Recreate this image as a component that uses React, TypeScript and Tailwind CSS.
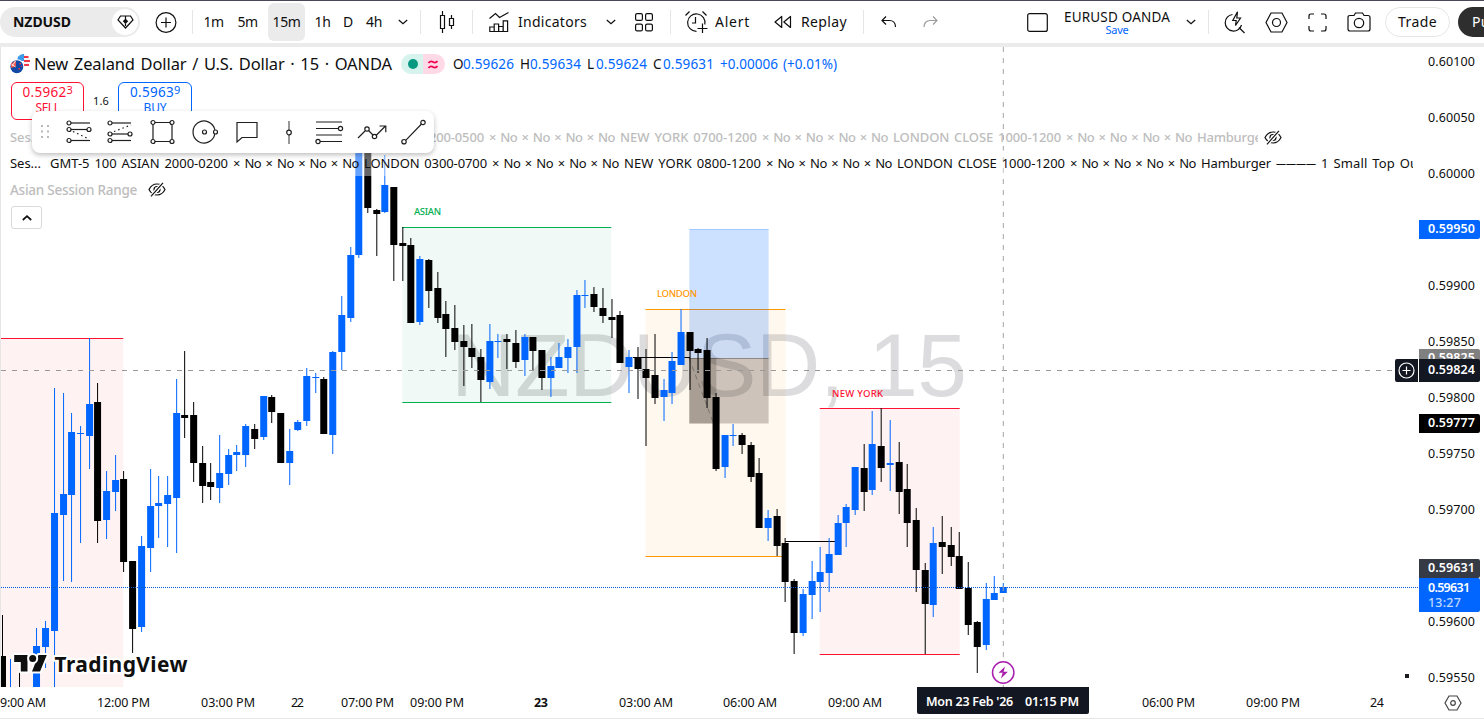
import { useLayoutEffect, useRef, useState } from 'react';
import type { ReactNode } from 'react';
import clsx from 'clsx';

// [high, body top, body bottom, low, 1 = up / 0 = down]
type Candle = [number, number, number, number, 0 | 1];

const CANDLES: Candle[] = [
  [615, 656, 687, 687, 0], [659, 687, 687, 687, 1], [668, 687, 687, 687, 0], [687, 687, 687, 687, 0],
  [628, 646, 687, 687, 1], [621, 628, 647, 668, 1], [388, 513, 631, 687, 1], [393, 494, 515, 581, 1],
  [413, 432, 495, 582, 1], [426, 433, 434, 543, 1], [338, 404, 436, 469, 1], [383, 402, 521, 543, 0],
  [471, 491, 520, 539, 1], [455, 480, 492, 511, 1], [471, 479, 562, 572, 0], [561, 561, 629, 653, 0],
  [536, 546, 627, 632, 1], [469, 506, 548, 572, 1], [476, 503, 506, 538, 1], [476, 495, 504, 547, 1],
  [379, 413, 498, 553, 1], [351, 415, 418, 438, 0], [402, 415, 463, 482, 0], [446, 463, 486, 503, 0],
  [463, 482, 487, 500, 0], [435, 473, 488, 503, 1], [449, 455, 474, 485, 1], [445, 452, 455, 471, 1],
  [424, 426, 455, 467, 1], [424, 429, 439, 449, 0], [396, 396, 437, 440, 1], [395, 397, 412, 423, 0],
  [413, 413, 463, 463, 0], [429, 451, 463, 485, 1], [420, 422, 430, 431, 1], [368, 376, 421, 426, 1],
  [373, 377, 378, 393, 1], [377, 379, 434, 434, 0], [351, 352, 435, 454, 1], [296, 315, 352, 370, 1],
  [247, 255, 318, 322, 1], [125, 130, 255, 258, 1], [125, 130, 208, 213, 0], [209, 210, 214, 256, 0],
  [155, 185, 212, 213, 1], [187, 187, 245, 281, 0], [227, 243, 246, 281, 0], [238, 245, 323, 323, 0],
  [256, 259, 322, 325, 1], [259, 260, 291, 308, 0], [272, 288, 318, 323, 0], [301, 314, 329, 357, 0],
  [305, 328, 342, 350, 0], [325, 341, 347, 386, 0], [324, 348, 357, 368, 0], [349, 357, 380, 402, 0],
  [324, 341, 382, 389, 1], [334, 341, 342, 358, 1], [334, 339, 342, 369, 0], [330, 343, 362, 368, 0],
  [334, 337, 360, 376, 1], [337, 337, 351, 370, 0], [350, 350, 378, 390, 0], [357, 366, 378, 397, 1],
  [343, 357, 368, 368, 1], [339, 347, 358, 373, 1], [290, 295, 347, 373, 1], [280, 295, 296, 308, 1],
  [287, 294, 307, 312, 0], [288, 308, 316, 323, 0], [299, 317, 320, 338, 0], [311, 315, 363, 363, 0],
  [350, 357, 367, 393, 1], [347, 357, 369, 399, 0], [349, 369, 378, 446, 0], [334, 375, 398, 404, 0],
  [379, 390, 397, 421, 1], [352, 361, 393, 404, 1], [309, 332, 365, 365, 1], [332, 332, 351, 390, 0],
  [348, 349, 353, 373, 0], [338, 350, 398, 408, 0], [393, 397, 469, 471, 0], [435, 435, 467, 478, 1],
  [424, 435, 436, 446, 1], [433, 435, 445, 454, 0], [442, 445, 477, 482, 0], [458, 473, 528, 528, 0],
  [510, 518, 528, 541, 1], [509, 516, 546, 556, 0], [538, 543, 582, 602, 0], [579, 581, 633, 654, 0],
  [589, 594, 633, 636, 1], [561, 581, 595, 619, 1], [547, 572, 582, 612, 1], [538, 554, 573, 592, 1],
  [515, 523, 555, 555, 1], [504, 507, 523, 547, 1], [467, 467, 510, 515, 1], [444, 468, 492, 511, 0],
  [411, 444, 490, 495, 1], [408, 446, 468, 482, 0], [420, 463, 465, 491, 1], [442, 462, 492, 514, 0],
  [464, 489, 523, 547, 0], [508, 520, 570, 592, 0], [563, 570, 604, 654, 0], [527, 543, 605, 617, 1],
  [516, 542, 547, 574, 0], [527, 545, 557, 566, 0], [532, 556, 589, 589, 0], [562, 588, 625, 635, 0],
  [621, 622, 647, 673, 0], [583, 599, 645, 650, 1], [576, 593, 600, 600, 1], [583, 587, 593, 593, 1],
];

const SESSIONS = [
  { x: 1, w: 122.3, top: 338, bottom: 687, fill: '#fff2f3', line: '#ff1133', open: true },
  { x: 402.3, w: 209, top: 227, bottom: 402, fill: '#f0f9f5', line: '#00b050', label: 'ASIAN', lx: 414, ly: 215, lw: 27 },
  { x: 645.5, w: 140, top: 309, bottom: 556, fill: '#fff8ef', line: '#ff9800', label: 'LONDON', lx: 657, ly: 297, lw: 40 },
  { x: 819.7, w: 140, top: 408, bottom: 654, fill: '#fff2f3', line: '#ff1133', label: 'NEW YORK', lx: 832, ly: 397, lw: 51 },
];

const TIME_TICKS = [
  { t: '9:00 AM', x: 0, w: 46 },
  { t: '12:00 PM', x: 97, w: 53 },
  { t: '03:00 PM', x: 201, w: 54 },
  { t: '22', x: 291, w: 13 },
  { t: '07:00 PM', x: 341, w: 53 },
  { t: '09:00 PM', x: 410, w: 54 },
  { t: '23', x: 534, w: 14, bold: true },
  { t: '03:00 AM', x: 619, w: 54 },
  { t: '06:00 AM', x: 723, w: 54 },
  { t: '09:00 AM', x: 828, w: 54 },
  { t: '06:00 PM', x: 1142, w: 53 },
  { t: '09:00 PM', x: 1246, w: 54 },
  { t: '24', x: 1370, w: 14 },
];

const PRICES = ['0.60100', '0.60050', '0.60000', '', '0.59900', '0.59850', '0.59800', '0.59750', '0.59700', '', '0.59600', '0.59550'];

// Text tracked so that it fills exactly `w` pixels
const Label = ({ w, children, className }: { w: number; children: string; className?: string }) => {
  const ref = useRef<HTMLSpanElement>(null);
  const [spacing, setSpacing] = useState(0);

  useLayoutEffect(() => {
    if (ref.current) {
      setSpacing((w - ref.current.getBoundingClientRect().width) / children.length);
    }
  }, [w, children]);

  return (
    <span ref={ref} className={clsx('inline-block shrink-0 whitespace-pre', className)} style={{ letterSpacing: `${spacing}px` }}>
      {children}
    </span>
  );
};

const Icon = ({ w, h, className, children }: { w: number; h: number; className?: string; children: ReactNode }) => (
  <svg
    width={w}
    height={h}
    viewBox={`0 0 ${w} ${h}`}
    fill="none"
    stroke="currentColor"
    strokeWidth="1.2"
    className={clsx('block shrink-0 overflow-visible', className)}
  >
    {children}
  </svg>
);

const Separator = ({ className }: { className?: string }) => (
  <div className={clsx('h-6 w-px shrink-0 bg-[#e6e6e6]', className)} />
);

const Chevron = () => (
  <Icon w={10} h={6}>
    <path d="M0.8 1l4.2 3.8L9.2 1" />
  </Icon>
);

const HiddenEye = ({ className }: { className?: string }) => (
  <Icon w={18} h={15} className={className}>
    <path d="M1 7.5C3 3.5 6 2 9 2s6 1.500 8 5.500c-2 4-5 5.500-8 5.500S3 11.500 1 7.500z" />
    <circle cx="9" cy="7.500" r="3" />
    <path d="M3.500 14L15 1" stroke="#fff" strokeWidth="3.500" />
    <path d="M3 14.300L15 .800" />
  </Icon>
);

const Header = () => (
  <header className="flex h-[42px] shrink-0 items-center overflow-hidden bg-white">
    <div className="flex h-[30px] w-[140px] shrink-0 items-center justify-between rounded-full bg-[#ebebeb] pr-[2px] pl-[13px]">
      <Label w={58} className="text-[14px] font-bold">NZDUSD</Label>
      <div className="flex size-[26px] items-center justify-center rounded-full bg-white">
        <Icon w={17} h={14}>
          <path d="M3.500 1h10L16 5 8.500 13 1 5z" />
          <path d="M8.500 3.500l2.700 2.700-2.700 2.700-2.700-2.700z" fill="currentColor" stroke="none" />
          <path d="M8.500 1v3M8.500 8.500V11" />
        </Icon>
      </div>
    </div>
    <div className="flex w-[52px] shrink-0 justify-center">
      <Icon w={22} h={22}>
        <circle cx="11" cy="11.500" r="9.900" />
        <path d="M11 6.500v10M6 11.500h10" />
      </Icon>
    </div>
    <Separator />
    <div className="ml-[3px] flex w-[35px] shrink-0 justify-center"><Label w={20}>1m</Label></div>
    <div className="flex w-[33px] shrink-0 justify-center"><Label w={20}>5m</Label></div>
    <div className="ml-1 flex h-[38px] w-[37px] shrink-0 items-center justify-center rounded-md bg-[#ebebeb]">
      <Label w={28}>15m</Label>
    </div>
    <div className="flex w-[35px] shrink-0 justify-center"><Label w={16}>1h</Label></div>
    <div className="flex w-[15px] shrink-0 justify-center"><Label w={9}>D</Label></div>
    <div className="flex w-[38px] shrink-0 justify-center"><Label w={16}>4h</Label></div>
    <div className="flex w-[19px] shrink-0 justify-center"><Chevron /></div>
    <Separator className="ml-2" />
    <div className="flex w-[51px] shrink-0 justify-center">
      <Icon w={16} h={22}>
        <path d="M1.500 4.500h4v13h-4zM3.500 0v4.500M3.500 17.500V22M10.500 7.500h4v7h-4zM12.500 4v3.500M12.500 14.500V18" />
      </Icon>
    </div>
    <Separator />
    <Icon w={20} h={20} className="ml-4">
      <path d="M.5 6.500L6.500 1.500l4 4L19.500.5M.8 19.500v-4.500h4.400v4.500zM5.200 19.500v-7.500h4.400v7.500zM9.700 19.500v-5h4.400v5zM14.200 19.500v-10.700h4.400v10.700z" />
    </Icon>
    <Label w={69} className="ml-[9px]">Indicators</Label>
    <div className="flex w-12 shrink-0 justify-center"><Chevron /></div>
    <Icon w={18} h={19}>
      <rect x=".6" y=".6" width="6.800" height="6.800" rx="1.500" />
      <rect x="10.600" y=".6" width="6.800" height="6.800" rx="1.500" />
      <rect x=".6" y="11.100" width="6.800" height="6.800" rx="1.500" />
      <rect x="10.600" y="11.100" width="6.800" height="6.800" rx="1.500" />
    </Icon>
    <Separator className="ml-[17px]" />
    <Icon w={23} h={22} className="ml-[14px]">
      <path d="M11.500 20.300A8.700 8.700 0 1 1 19.800 13.500M10.500 6v6H7M.5 4.500L4.500.5M17.500.5l4 4M17.500 12.500v9.500M12.500 17.500h10" />
    </Icon>
    <Label w={35} className="ml-[7px]">Alert</Label>
    <Icon w={18} h={14} className="ml-6">
      <path d="M7.700 1.500v11L1 7zM16.500 1.500v11L9.800 7z" strokeLinejoin="round" />
    </Icon>
    <Label w={46} className="ml-[9px]">Replay</Label>
    <Separator className="ml-4" />
    <Icon w={16} h={12} className="ml-[17px]">
      <path d="M5 .5L1 4.500l4 4M1 4.500h7.500c3.500 0 6 2.500 6 6.500" />
    </Icon>
    <Icon w={15} h={12} className="ml-[26px] text-[#9c9c9c]">
      <path d="M10 .5l4 4-4 4M14 4.500H7c-3.500 0-6 2.500-6 6.500" />
    </Icon>
    <Icon w={21} h={19} className="ml-[89px]">
      <rect x=".7" y=".6" width="19.600" height="17.800" rx="2" />
    </Icon>
    <div className="mt-[2px] ml-4 flex w-[106px] shrink-0 flex-col items-center">
      <Label w={106} className="text-[13.5px] leading-[14px]">EURUSD OANDA</Label>
      <Label w={23} className="text-[11px] leading-[12px] text-[#0066ff]">Save</Label>
    </div>
    <div className="ml-4"><Chevron /></div>
    <Separator className="ml-[12px]" />
    <Icon w={20} h={23} className="ml-4">
      <path d="M7.500 3.500A8.300 8.300 0 1 0 16.500 14M14 16.500l5.500 5.500M12.500.8L7.800 9.500h3.400l-.7 5L15.500 7h-3.700z" />
    </Icon>
    <Icon w={23} h={21} className="ml-5">
      <path d="M6 1h11l5 9.500-5 9.500H6L1 10.500z" />
      <circle cx="11.500" cy="10.500" r="4" />
    </Icon>
    <Icon w={19} h={19} className="ml-5">
      <path d="M1 6V3q0-2 2-2h3M13 1h3q2 0 2 2v3M18 13v3q0 2-2 2h-3M6 18H3q-2 0-2-2v-3" />
    </Icon>
    <Icon w={24} h={20} className="ml-5">
      <path d="M1 5.500q0-2 2-2h4L8.500 1h7L17 3.500h4q2 0 2 2V17q0 2-2 2H3q-2 0-2-2z" />
      <circle cx="12" cy="11" r="4.700" />
    </Icon>
    <div className="ml-[14px] flex h-[30px] w-[65px] shrink-0 items-center justify-center rounded-full border border-[#e6e6e6]">
      <Label w={39}>Trade</Label>
    </div>
    <div className="ml-2 flex h-[30px] w-[80px] shrink-0 items-center rounded-full bg-[#2e2e2e] pl-[14px] text-white">
      <Label w={50}>Publish</Label>
    </div>
  </header>
);

const Chart = () => (
  <svg width="1418" height="640" viewBox="0 47 1418 640" className="block">
    {SESSIONS.map((s) => (
      <g key={s.x}>
        <rect x={s.x} y={s.top} width={s.w} height={s.bottom - s.top} fill={s.fill} />
        <rect x={s.x} y={s.top} width={s.w} height="1" fill={s.line} />
        {!s.open && <rect x={s.x} y={s.bottom} width={s.w} height="1" fill={s.line} />}
      </g>
    ))}
    <text x="451" y="395.500" textLength="516" fontSize="89.500" fill="#131722" fillOpacity="0.15" className="font-['Liberation_Sans',sans-serif]">
      NZDUSD, 15
    </text>

    {/* Short position tool */}
    <rect x="689.300" y="229" width="79.300" height="129" fill="#0066ff" fillOpacity="0.2" />
    <rect x="689.300" y="229" width="79.300" height="1" fill="#0066ff" fillOpacity="0.2" />
    <rect x="689.300" y="358" width="79.300" height="65.500" fill="#1a0a00" fillOpacity="0.22" />
    <rect x="689.300" y="358" width="27" height="65.500" fill="#1a0a00" fillOpacity="0.2" />
    <rect x="689.300" y="358" width="79.300" height="1" fill="#000" fillOpacity="0.3" />
    <path d="M689 358L713 422" stroke="#7d756e" strokeDasharray="5 4" />

    <rect x="633" y="357" width="57" height="1" />
    <rect x="785" y="541" width="50" height="1" />

    {CANDLES.map(([high, top, bottom, low, up], i) => {
      const x = Math.round(1.65 + 8.698 * i) * 1.00078;
      const color = up ? '#0066ff' : '#000';
      return (
        <g key={i} fill={color}>
          <rect x={x} y={high} width="1" height={low - high} />
          <rect x={x - 3} y={top} width="7" height={bottom - top} />
        </g>
      );
    })}

    {SESSIONS.filter((s) => s.label).map((s) => (
      <text key={s.x} x={s.lx} y={s.ly} textLength={s.lw} fontSize="9.500" fontWeight="500" fill={s.line}>{s.label}</text>
    ))}

    {/* Last price and crosshair */}
    <path d="M1 587.500H1418" stroke="#0058dc" strokeDasharray="1 1" />
    <path d="M1 370.500H1395" stroke="#999" strokeDasharray="5 6" />
    <path d="M1003.300 47V687" stroke="#a3a3a3" strokeDasharray="5 6" />
    <circle cx="1003.200" cy="672.500" r="10.700" fill="#fff" stroke="#a81fae" strokeWidth="1.500" />
    <path d="M1005 666.500l-6.500 6.300h4.200l-1.800 5.700 7-6.800h-4.300z" fill="#a81fae" />
    <rect x="1405" y="674" width="4" height="4" fill="#1b1b20" />

    {/* Brand mark */}
    <g fill="#0f0f0f" stroke="#fff" strokeWidth="4" strokeLinejoin="round" paintOrder="stroke">
      <path d="M14.200 655h13.300v16.500h-6.700v-9.500h-6.600zM38.500 655h8.300l-6.800 16.500h-8z" />
      <circle cx="32.700" cy="658.500" r="3.500" />
      <text x="54.500" y="671.500" textLength="133" fontSize="21" fontWeight="700">TradingView</text>
    </g>
  </svg>
);

const YES_NO = '× No × No × No × No';

const Legend = () => (
  <div className="absolute top-[5px] left-[10px] w-[1404px]">
    <div className="flex h-[24px] items-center">
      <svg width="20" height="20" viewBox="0 0 20 20" className="shrink-0">
        <circle cx="13.500" cy="6.500" r="6.500" fill="#f4f5f7" />
        <path d="M13 0A6.500 6.500 0 0 0 7 7h7V0z" fill="#3b9bea" />
        <path d="M14 2h4.500v2H14zM14 6h6v2h-6zM13 10h6v2h-6z" fill="#f23645" />
        <circle cx="7" cy="12.500" r="7.300" fill="#fff" />
        <circle cx="6.800" cy="12.700" r="6.500" fill="#1148a5" />
        <path d="M1 9.500L6 6.500v6L1 14z" fill="#e8574f" />
        <path d="M1.500 10l4 3M5.500 7L2 12" stroke="#fff" strokeWidth=".8" />
        <path d="M9.500 9h1.500v1.500H9.500zM8.500 14h1.500v1.500H8.500zM11 12h1v1h-1z" fill="#f23645" />
      </svg>
      <Label w={358} className="ml-1 text-[16.5px] [word-spacing:1.5px]">New Zealand Dollar / U.S. Dollar · 15 · OANDA</Label>
      <div className="ml-[9px] flex h-5 w-[44px] shrink-0 overflow-hidden rounded-full">
        <div className="flex w-[22px] items-center justify-center bg-[#d7f3ee]">
          <div className="ml-[2px] size-[10px] rounded-full bg-[#089981]" />
        </div>
        <div className="flex w-[22px] items-center justify-center bg-[#ffd9e6] text-[#f0004f]">
          <Icon w={10} h={9} className="mr-[2px]">
            <path d="M.5 3Q2.500.5 5 2t4.500-.8M.5 8Q2.500 5.500 5 7t4.500-.8" strokeWidth="1.800" />
          </Icon>
        </div>
      </div>
      <div className="ml-2 flex items-center text-[13.5px] text-[#0066ff]">
        <Label w={10} className="text-[#0f0f0f]">O</Label>
        <Label w={51}>0.59626</Label>
        <Label w={10} className="ml-[6px] text-[#0f0f0f]">H</Label>
        <Label w={51}>0.59634</Label>
        <Label w={9} className="ml-[6px] text-[#0f0f0f]">L</Label>
        <Label w={51}>0.59624</Label>
        <Label w={10} className="ml-[6px] text-[#0f0f0f]">C</Label>
        <Label w={51}>0.59631</Label>
        <Label w={58} className="ml-[6px]">+0.00006</Label>
        <Label w={54} className="ml-[5px]">(+0.01%)</Label>
      </div>
    </div>

    <div className="ml-px flex pt-[6px]">
      <div className="flex h-[38px] w-[73px] flex-col items-center rounded-md border border-[#ff1133] bg-white pt-px text-[#ff1133]">
        <div className="flex leading-[16px]">
          <Label w={44} className="text-[13.5px]">0.5962</Label>
          <Label w={6} className="mt-[-2px] text-[11px]">3</Label>
        </div>
        <Label w={24} className="text-[12px] leading-[16px]">SELL</Label>
      </div>
      <Label w={16} className="mt-[9px] ml-[9px] text-[11px]">1.6</Label>
      <div className="ml-[9px] flex h-[38px] w-[74px] flex-col items-center rounded-md border border-[#0066ff] bg-white pt-px text-[#0066ff]">
        <div className="flex leading-[16px]">
          <Label w={44} className="text-[13.5px]">0.5963</Label>
          <Label w={6} className="mt-[-2px] text-[11px]">9</Label>
        </div>
        <Label w={23} className="text-[12px] leading-[16px]">BUY</Label>
      </div>
    </div>

    <div className="mt-1 flex h-[26px] items-center text-[13px] font-medium text-[#bdbdbd] [word-spacing:1.5px]">
      <Label w={31}>Ses...</Label>
      <div className="ml-[320px] flex w-[897px] shrink-0 gap-[5px] overflow-hidden">
        <Label w={123}>LONDON 0200-0500</Label>
        <Label w={126}>{YES_NO}</Label>
        <Label w={137}>NEW YORK 0700-1200</Label>
        <Label w={126}>{YES_NO}</Label>
        <Label w={168}>LONDON CLOSE 1000-1200</Label>
        <Label w={126}>{YES_NO}</Label>
        <Label w={70}>Hamburger</Label>
      </div>
      <HiddenEye className="ml-[6px] text-[#0f0f0f]" />
    </div>
    <div className="flex h-[26px] items-center bg-white/40 text-[13px] [word-spacing:1.5px]">
      <Label w={31}>Ses...</Label>
      <div className="ml-[9px] flex w-[1363px] shrink-0 items-center gap-[5px] overflow-hidden">
        <Label w={178}>GMT-5 100 ASIAN 2000-0200</Label>
        <Label w={126}>{YES_NO}</Label>
        <Label w={123}>LONDON 0300-0700</Label>
        <Label w={127}>{YES_NO}</Label>
        <Label w={137}>NEW YORK 0800-1200</Label>
        <Label w={126}>{YES_NO}</Label>
        <Label w={168}>LONDON CLOSE 1000-1200</Label>
        <Label w={126}>{YES_NO}</Label>
        <Label w={70}>Hamburger</Label>
        <Label w={40} className="text-[10px]">————</Label>
        <Label w={102}>1 Small Top Out</Label>
      </div>
    </div>
    <div className="flex h-[27px] items-center">
      <Label w={127} className="text-[13.5px] font-medium text-[#bdbdbd]">Asian Session Range</Label>
      <HiddenEye className="ml-[11px]" />
    </div>
    <div className="mt-[3px] ml-px flex h-[23px] w-[31px] items-center justify-center rounded-[3px] border border-[#d9d9d9] bg-white">
      <Icon w={10} h={6}>
        <path d="M.8 5L5 1.200 9.200 5" strokeWidth="1.700" />
      </Icon>
    </div>
  </div>
);

const DrawingToolbar = () => (
  <div className="absolute top-[64px] left-[32px] flex h-[42px] w-[402px] items-center rounded-lg bg-white pb-px text-[#1f1f1f] shadow-[0_2px_5px_rgba(0,0,0,0.25)]">
    <svg width="9" height="13" viewBox="0 0 9 13" className="ml-[9px] block shrink-0" fill="#b8b8b8">
      <path d="M0 0h2v2H0zM6 0h2v2H6zM0 5.500h2v2H0zM6 5.500h2v2H6zM0 11h2v2H0zM6 11h2v2H6z" />
    </svg>
    <Icon w={25} h={24} className="ml-4">
      <circle cx="3" cy="3" r="2" /><path d="M5 3h19" />
      <circle cx="3" cy="9.500" r="2" /><path d="M5 9.500h16" /><circle cx="23" cy="9.500" r="2" />
      <path d="M7 11.500l16 7.500" strokeDasharray="1.500 3" />
      <circle cx="3" cy="20.500" r="2" /><path d="M5 20.500h19" />
    </Icon>
    <Icon w={25} h={24} className="ml-4">
      <circle cx="3" cy="3" r="2" /><path d="M5 3h19" />
      <path d="M7 11.500L24 5" strokeDasharray="1.500 3" />
      <circle cx="3" cy="14" r="2" /><path d="M5 14h16" /><circle cx="23" cy="14" r="2" />
      <circle cx="3" cy="20.500" r="2" /><path d="M5 20.500h19" />
    </Icon>
    <Icon w={25} h={24} className="ml-[18px]">
      <path d="M5 2.500h15M5 21.500h15M3 4.500v15M22 4.500v15" />
      <circle cx="3" cy="2.500" r="2" /><circle cx="22" cy="2.500" r="2" />
      <circle cx="3" cy="21.500" r="2" /><circle cx="22" cy="21.500" r="2" />
    </Icon>
    <Icon w={25} h={24} className="ml-[18px]">
      <path d="M21.800 9.800A11 11 0 1 0 21.800 14.200" />
      <circle cx="11.500" cy="12" r="2" /><circle cx="22.500" cy="12" r="2" />
    </Icon>
    <Icon w={22} h={22} className="ml-[18px]">
      <path d="M1 1.500h20v15H6L1 21z" />
    </Icon>
    <Icon w={14} h={24} className="ml-6">
      <path d="M7 1v9M7 15v9" stroke="#777" strokeWidth="1.500" /><circle cx="7" cy="12.500" r="2.300" />
    </Icon>
    <Icon w={29} h={24} className="ml-[19px]">
      <path d="M1 2h26M1 8.500h22M1 15h26M5 21.500h22" strokeWidth="1.200" />
      <circle cx="25.500" cy="8.500" r="2.100" /><circle cx="3" cy="21.500" r="2.100" />
    </Icon>
    <Icon w={30} h={18} className="ml-[13px]">
      <path d="M1 15l7.500-7.500M11.500 7.500l4.500 4.500M19 12.500L28 3.500M22.500 3h6.300v6.300" />
      <circle cx="10" cy="6" r="2.200" /><circle cx="17.500" cy="13.500" r="2.200" />
    </Icon>
    <Icon w={25} h={24} className="ml-[14px]">
      <path d="M4.700 20.300L20.500 4" />
      <circle cx="3" cy="21.700" r="2.200" /><circle cx="22" cy="2.500" r="2.200" />
    </Icon>
  </div>
);

const Badge = ({ price, className }: { price: string; className: string }) => (
  <div className={clsx('absolute left-px flex w-[61px] items-center overflow-hidden rounded-r-[2px] pl-[9px] text-[12.5px] leading-none font-semibold text-white', className)}>
    <Label w={47}>{price}</Label>
  </div>
);

const PriceAxis = () => (
  <div className="relative h-[640px] w-[66px] shrink-0">
    <div className="flex h-full flex-col overflow-hidden pt-[6px]">
      {PRICES.map((price, i) => (
        <div key={i} className="h-14 shrink-0 pl-[10px] text-[12.5px] leading-[17px]">
          {price && <Label w={47}>{price}</Label>}
        </div>
      ))}
    </div>
    <Badge price="0.59950" className="top-[173px] h-[19px] bg-[#0066ff]" />
    <Badge price="0.59825" className="top-[302px] h-[19px] bg-[#808080]" />
    <Badge price="0.59824" className="top-[312px] h-[23px] bg-[#131722]" />
    <Badge price="0.59777" className="top-[367px] h-[19px] bg-black" />
    <Badge price="0.59631" className="top-[512px] h-[19px] bg-[#363a45]" />
    <div className="absolute top-[531px] left-px flex h-[34px] w-[61px] flex-col rounded-r-[2px] bg-[#0066ff] pt-[2px] pl-[9px] text-[12.5px] leading-[15px] font-semibold text-white">
      <Label w={47}>0.59631</Label>
      <div className="font-medium text-white/75"><Label w={33}>13:27</Label></div>
    </div>
    <div className="absolute top-[312px] left-[-23px] flex h-[23px] w-[23px] items-center justify-center rounded-l-[2px] bg-[#131722] text-white">
      <Icon w={17} h={17}>
        <circle cx="8.500" cy="8.500" r="7.500" />
        <path d="M8.500 4.500v8M4.500 8.500h8" />
      </Icon>
    </div>
  </div>
);

const TimeAxis = () => (
  <div className="relative flex h-[31px] shrink-0 items-center">
    <svg width="1418" height="31" viewBox="0 687 1418 31" className="block shrink-0" fontSize="12.500" fill="#0f0f0f">
      {TIME_TICKS.map((tick) => (
        <text key={tick.x} x={tick.x} y="707" textLength={tick.w} fontWeight={tick.bold ? 700 : 400}>{tick.t}</text>
      ))}
    </svg>
    <Icon w={18} h={16} className="ml-[26px] text-[#444]">
      <path d="M5 1h8l4 7-4 7H5L1 8z" />
      <circle cx="9" cy="8" r="2.300" />
    </Icon>
    <div className="absolute top-0 left-[917px] flex h-[27px] w-[172px] items-center rounded-b-[2px] bg-[#131722] pt-[3px] pl-[9px] text-[12.5px] font-semibold text-white">
      <Label w={87}>Mon 23 Feb '26</Label>
      <Label w={54} className="ml-3">01:15 PM</Label>
    </div>
  </div>
);

export default function App() {
  return (
    <div className="flex h-[722px] w-[1484px] flex-col overflow-hidden bg-white font-['Noto_Sans',sans-serif] text-[14px] leading-[20px] text-[#0f0f0f]">
      <div className="h-px shrink-0 bg-[#4a4858]" />
      <Header />
      <div className="h-1 shrink-0 bg-[#ebebeb]" />
      <main className="relative flex h-[640px] shrink-0">
        <Chart />
        <PriceAxis />
        <Legend />
        <DrawingToolbar />
        <div className="absolute inset-y-0 left-0 w-px bg-[#e6e6e6]" />
      </main>
      <TimeAxis />
      <div className="h-px shrink-0 bg-[#e6e6e6]" />
    </div>
  );
}
